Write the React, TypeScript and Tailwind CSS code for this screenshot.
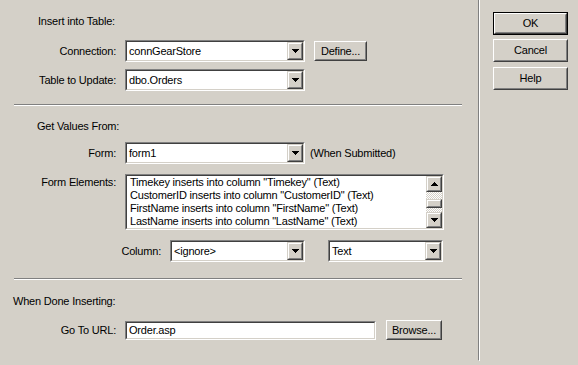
import React from "react";

const Arrow = ({ up = false }: { up?: boolean }) => (
  <svg width="7" height="4" viewBox="0 0 7 4" shapeRendering="crispEdges" style={{ transform: up ? "rotate(180deg)" : undefined }}>
    <rect x="0" y="0" width="7" height="1" fill="#000" />
    <rect x="1" y="1" width="5" height="1" fill="#000" />
    <rect x="2" y="2" width="3" height="1" fill="#000" />
    <rect x="3" y="3" width="1" height="1" fill="#000" />
  </svg>
);

const Button = ({ label, className = "", def = false }: { label: string; className?: string; def?: boolean }) => {
  const inner = (
    <div className="w-full h-full border border-t-white border-l-white border-b-[#404040] border-r-[#404040]">
      <div className="w-full h-full border border-t-[#d4d0c8] border-l-[#d4d0c8] border-b-[#808080] border-r-[#808080] flex items-center justify-center text-black">
        {label}
      </div>
    </div>
  );
  if (def) {
    return <div className={`border border-black ${className}`}>{inner}</div>;
  }
  return <div className={className}>{inner}</div>;
};

const ComboBtn = () => (
  <div className="w-[16px] h-full border border-t-[#d4d0c8] border-l-[#d4d0c8] border-b-[#404040] border-r-[#404040] shrink-0">
    <div className="w-full h-full border border-t-white border-l-white border-b-[#808080] border-r-[#808080] flex items-center justify-center bg-[#d4d0c8]">
      <Arrow />
    </div>
  </div>
);

const Sunken = ({ className = "", children }: { className?: string; children?: React.ReactNode }) => (
  <div className={`border border-t-[#808080] border-l-[#808080] border-b-white border-r-white ${className}`}>
    <div className="w-full h-full border border-t-[#404040] border-l-[#404040] border-b-[#d4d0c8] border-r-[#d4d0c8] bg-white flex">
      {children}
    </div>
  </div>
);

const Select = ({ value, className = "" }: { value: string; className?: string }) => (
  <Sunken className={className}>
    <div className="flex-1 flex items-center pl-[2px] overflow-hidden whitespace-nowrap">{value}</div>
    <ComboBtn />
  </Sunken>
);

const Separator = () => (
  <div className="ml-[14px] w-[448px] border-t border-t-[#808080] border-b border-b-white" />
);

const Label = ({ text, w = "w-[116px]" }: { text: string; w?: string }) => (
  <div className={`${w} text-right shrink-0 whitespace-nowrap`}>{text}</div>
);

export default function App() {
  const items = [
    'Timekey inserts into column "Timekey" (Text)',
    'CustomerID inserts into column "CustomerID" (Text)',
    'FirstName inserts into column "FirstName" (Text)',
    'LastName inserts into column "LastName" (Text)',
  ];
  return (
    <div
      className="w-[578px] h-[365px] bg-[#d4d0c8] flex text-[11px] leading-[13px] text-black tracking-[-0.2px] overflow-hidden"
      style={{ fontFamily: '"Liberation Sans", Arial, sans-serif' }}
    >
      <div className="w-[478px] flex flex-col">
        <div className="mt-[15px] pl-[38px] h-[13px]">Insert into Table:</div>
        <div className="mt-[12px] h-[22px] flex items-center">
          <Label text="Connection:" />
          <Select value="connGearStore" className="ml-[9px] w-[180px] h-[22px]" />
          <Button label="Define..." className="ml-[9px] w-[53px] h-[20px]" />
        </div>
        <div className="mt-[7px] h-[22px] flex items-center">
          <Label text="Table to Update:" />
          <Select value="dbo.Orders" className="ml-[9px] w-[180px] h-[22px]" />
        </div>
        <div className="mt-[13px]">
          <Separator />
        </div>
        <div className="mt-[14px] pl-[37px] h-[13px]">Get Values From:</div>
        <div className="mt-[9px] h-[22px] flex items-center">
          <Label text="Form:" />
          <Select value="form1" className="ml-[9px] w-[180px] h-[22px]" />
          <div className="ml-[5px] whitespace-nowrap">(When Submitted)</div>
        </div>
        <div className="mt-[10px] flex items-start">
          <Label text="Form Elements:" w="w-[116px] pt-[2px]" />
          <Sunken className="ml-[9px] w-[319px] h-[56px]">
            <div className="flex-1 pl-[3px] overflow-hidden whitespace-nowrap">
              {items.map((t) => (
                <div key={t} className="h-[13px]">{t}</div>
              ))}
            </div>
            <div className="w-[16px] h-full flex flex-col shrink-0">
              <div className="h-[16px] border border-t-[#d4d0c8] border-l-[#d4d0c8] border-b-[#404040] border-r-[#404040]">
                <div className="w-full h-full border border-t-white border-l-white border-b-[#808080] border-r-[#808080] bg-[#d4d0c8] flex items-center justify-center">
                  <Arrow up />
                </div>
              </div>
              <div className="h-[7px] bg-[repeating-conic-gradient(#ffffff_0_25%,#d4d0c8_0_50%)] bg-[length:2px_2px]" />
              <div className="h-[9px] border border-t-[#d4d0c8] border-l-[#d4d0c8] border-b-[#404040] border-r-[#404040]">
                <div className="w-full h-full border border-t-white border-l-white border-b-[#808080] border-r-[#808080] bg-[#d4d0c8]" />
              </div>
              <div className="flex-1 bg-[repeating-conic-gradient(#ffffff_0_25%,#d4d0c8_0_50%)] bg-[length:2px_2px]" />
              <div className="h-[16px] border border-t-[#d4d0c8] border-l-[#d4d0c8] border-b-[#404040] border-r-[#404040]">
                <div className="w-full h-full border border-t-white border-l-white border-b-[#808080] border-r-[#808080] bg-[#d4d0c8] flex items-center justify-center">
                  <Arrow />
                </div>
              </div>
            </div>
          </Sunken>
        </div>
        <div className="mt-[10px] h-[22px] flex items-center">
          <Label text="Column:" w="w-[161px]" />
          <Select value="<ignore>" className="ml-[9px] w-[135px] h-[22px]" />
          <Select value="Text" className="ml-[23px] w-[115px] h-[22px]" />
        </div>
        <div className="mt-[16px]">
          <Separator />
        </div>
        <div className="mt-[15px] pl-[13px] h-[13px]">When Done Inserting:</div>
        <div className="mt-[12px] h-[20px] flex items-center">
          <Label text="Go To URL:" />
          <Sunken className="ml-[9px] w-[251px] h-[19px]">
            <div className="flex items-center pl-[2px] whitespace-nowrap">Order.asp</div>
          </Sunken>
          <Button label="Browse..." className="ml-[10px] w-[56px] h-[20px]" />
        </div>
      </div>
      <div className="w-[2px] h-[361px] border-l border-l-[#808080] border-r border-r-white border-b border-b-white" />
      <div className="ml-[13px] pt-[12px] flex flex-col">
        <Button label="OK" def className="w-[75px] h-[23px]" />
        <Button label="Cancel" className="mt-[4px] w-[75px] h-[23px]" />
        <Button label="Help" className="mt-[5px] w-[75px] h-[23px]" />
      </div>
    </div>
  );
}
